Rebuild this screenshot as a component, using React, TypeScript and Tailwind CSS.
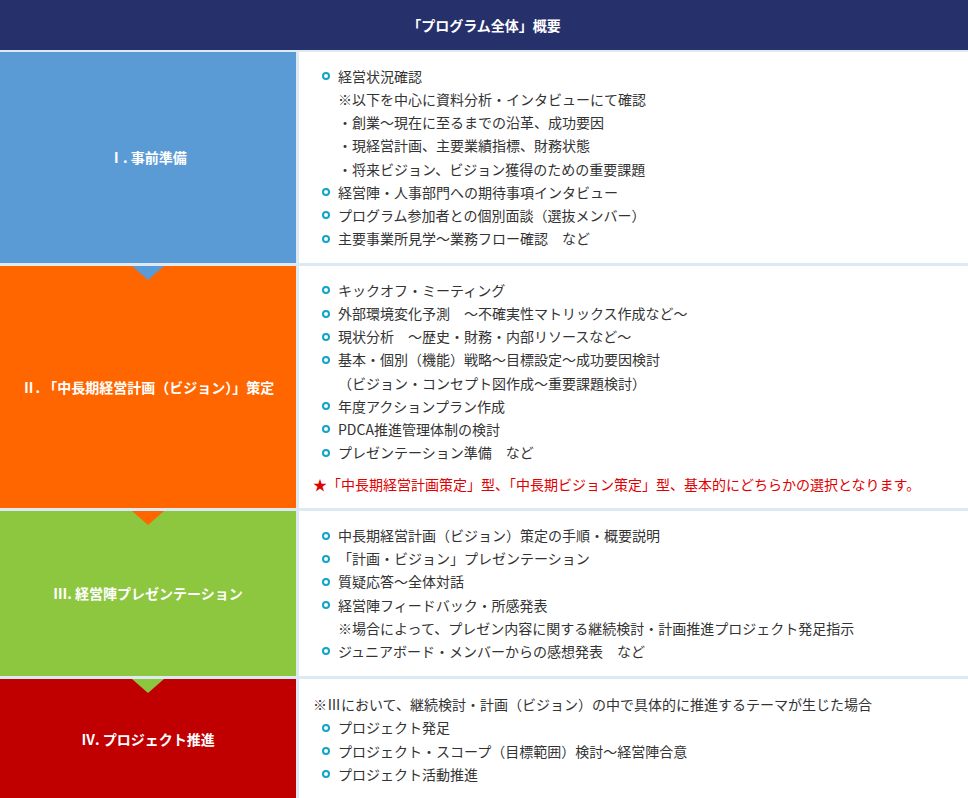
const font = { fontFamily: '"Noto Sans CJK JP", "Noto Sans", sans-serif' }

type Line = { t: string; b?: boolean; plain?: boolean }

const rows: {
  label: string
  bg: string
  tri: string
  h: string
  lines: Line[]
  note?: string
}[] = [
  {
    label: "Ⅰ. 事前準備",
    bg: "bg-[#5b9bd5]",
    tri: "border-t-[#5b9bd5]",
    h: "h-[211px]",
    lines: [
      { t: "経営状況確認", b: true },
      { t: "※以下を中心に資料分析・インタビューにて確認" },
      { t: "・創業～現在に至るまでの沿革、成功要因" },
      { t: "・現経営計画、主要業績指標、財務状態" },
      { t: "・将来ビジョン、ビジョン獲得のための重要課題" },
      { t: "経営陣・人事部門への期待事項インタビュー", b: true },
      { t: "プログラム参加者との個別面談（選抜メンバー）", b: true },
      { t: "主要事業所見学～業務フロー確認　など", b: true },
    ],
  },
  {
    label: "Ⅱ. 「中長期経営計画（ビジョン）」策定",
    bg: "bg-[#ff6600]",
    tri: "border-t-[#ff6600]",
    h: "h-[242px]",
    lines: [
      { t: "キックオフ・ミーティング", b: true },
      { t: "外部環境変化予測　～不確実性マトリックス作成など～", b: true },
      { t: "現状分析　～歴史・財務・内部リソースなど～", b: true },
      { t: "基本・個別（機能）戦略～目標設定～成功要因検討", b: true },
      { t: "（ビジョン・コンセプト図作成～重要課題検討）" },
      { t: "年度アクションプラン作成", b: true },
      { t: "PDCA推進管理体制の検討", b: true },
      { t: "プレゼンテーション準備　など", b: true },
    ],
    note: "★「中長期経営計画策定」型、「中長期ビジョン策定」型、基本的にどちらかの選択となります。",
  },
  {
    label: "Ⅲ. 経営陣プレゼンテーション",
    bg: "bg-[#8dc63f]",
    tri: "border-t-[#8dc63f]",
    h: "h-[165px]",
    lines: [
      { t: "中長期経営計画（ビジョン）策定の手順・概要説明", b: true },
      { t: "「計画・ビジョン」プレゼンテーション", b: true },
      { t: "質疑応答～全体対話", b: true },
      { t: "経営陣フィードバック・所感発表", b: true },
      { t: "※場合によって、プレゼン内容に関する継続検討・計画推進プロジェクト発足指示" },
      { t: "ジュニアボード・メンバーからの感想発表　など", b: true },
    ],
  },
  {
    label: "Ⅳ. プロジェクト推進",
    bg: "bg-[#c00000]",
    tri: "",
    h: "h-[121px]",
    lines: [
      { t: "※Ⅲにおいて、継続検討・計画（ビジョン）の中で具体的に推進するテーマが生じた場合", plain: true },
      { t: "プロジェクト発足", b: true },
      { t: "プロジェクト・スコープ（目標範囲）検討～経営陣合意", b: true },
      { t: "プロジェクト活動推進", b: true },
    ],
  },
]

export default function App() {
  return (
    <div className="w-[968px] h-[798px] overflow-hidden bg-white text-[#333] text-[14px]" style={font}>
      <div className="h-[50px] bg-[#26306b] flex items-center justify-center text-white font-bold text-[14px]">
        「プログラム全体」概要
      </div>
      {rows.map((r, i) => (
        <div key={i} className={`flex border-t-[2px] border-[#dde9f3] ${i > 0 ? "border-t-[3px]" : ""}`}>
          <div className={`relative w-[296px] shrink-0 ${r.h} ${r.bg} flex items-center justify-center text-white font-bold`}>
            {r.label}
            {r.tri && (
              <div
                className={`absolute z-10 left-[132px] bottom-[-17px] w-0 h-0 border-l-[16px] border-r-[16px] border-t-[14px] border-l-transparent border-r-transparent ${r.tri}`}
              />
            )}
          </div>
          <div className="w-[3px] bg-[#dde9f3]" />
          <div className="flex-1 flex flex-col justify-center pl-[14px]">
            {r.lines.map((l, j) => (
              <div key={j} className="flex items-center h-[23.2px] leading-[23px]">
                {l.plain ? (
                  <span>{l.t}</span>
                ) : (
                  <>
                    <span className="w-[25px] shrink-0 flex justify-center">
                      {l.b && <span className="w-[8px] h-[8px] rounded-full border-[2px] border-[#13a3c5]" />}
                    </span>
                    <span>{l.t}</span>
                  </>
                )}
              </div>
            ))}
            {r.note && <div className="mt-[10px] text-[#e00000]">{r.note}</div>}
          </div>
        </div>
      ))}
    </div>
  )
}
